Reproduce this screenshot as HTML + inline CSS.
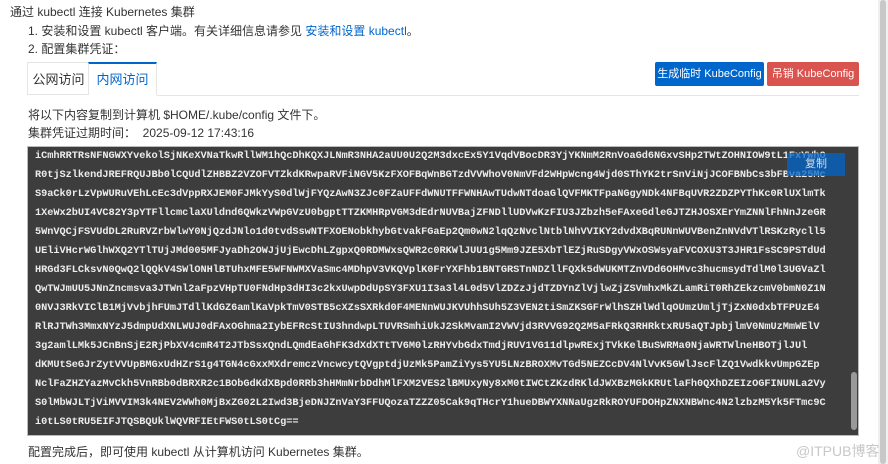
<!DOCTYPE html>
<html><head><meta charset="utf-8"><style>
body{margin:0;width:888px;height:464px;background:#fff;font-family:"Liberation Sans","Noto Sans CJK SC",sans-serif;font-size:12px;color:#333;position:relative;overflow:hidden}
.a{position:absolute;white-space:nowrap;line-height:16px}
.tab{position:absolute;top:62px;height:33px;line-height:33px;text-align:center;font-size:13px;border:1px solid #e5e5e5;box-sizing:border-box}
.btn{position:absolute;top:62px;height:24px;line-height:24px;color:#fff;text-align:center;font-size:11px;border-radius:2px;white-space:nowrap;overflow:hidden}
.ta{position:absolute;left:27px;top:146px;width:832px;height:290px;background:#3d3d3d;border:1px solid #bbb;box-sizing:border-box;overflow:hidden}
.ta pre{margin:0;position:absolute;left:7px;top:-19px;font-family:"Liberation Mono",monospace;font-size:10.3px;line-height:19px;color:#ececec;font-weight:bold;letter-spacing:-0.05px}
</style></head><body>
<div class="a" style="left:10px;top:4px">通过 kubectl 连接 Kubernetes 集群</div>
<div class="a" style="left:28px;top:23px">1. 安装和设置 kubectl 客户端。有关详细信息请参见 <span style="color:#0066cc">安装和设置 kubectl</span>。</div>
<div class="a" style="left:28px;top:41px">2. 配置集群凭证：</div>
<div class="tab" style="left:27px;width:62px;color:#333;border-right:none">公网访问</div>
<div class="tab" style="left:88px;width:69px;color:#0066cc;border-top:2px solid #0066cc;border-bottom:none;background:#fff;line-height:31px">内网访问</div>
<div class="a" style="left:157px;top:95px;width:702px;height:1px;background:#e5e5e5"></div>
<div class="btn" style="left:655px;width:109px;background:#0066cc">生成临时 KubeConfig</div>
<div class="btn" style="left:767px;width:92px;background:#d9534f">吊销 KubeConfig</div>
<div class="a" style="left:28px;top:107px">将以下内容复制到计算机 $HOME/.kube/config 文件下。</div>
<div class="a" style="left:28px;top:125px">集群凭证过期时间：&nbsp; 2025-09-12 17:43:16</div>
<div class="ta"><pre>ZXZpcHNOaSYyYWtjYUZJbmZ3dWx5UmNUbmtuSVZrVWN0dGpxbmhNRmlTcXVhRXZEbFdMNzBvTmZhS1BXY3NLZkhLT2NwdFRJUnFBSmN0UlAx
iCmhRRTRsNFNGWXYvekolSjNKeXVNaTkwRllWM1hQcDhKQXJLNmR3NHA2aUU0U2Q2M3dxcEx5Y1VqdVBocDR3YjYKNmM2RnVoaGd6NGxvSHp2TWtZOHNIOW9tL1FxYWhO
R0tjSzlkendJREFRQUJBb0lCQUdlZHBBZ2VZOFVTZkdKRwpaRVFiNGV5KzFXOFBqWnBGTzdVVWhoV0NmVFd2WHpWcng4Wjd0SThYK2trSnViNjJCOFBNbCs3bFBva25Mc
S9aCk0rLzVpWURuVEhLcEc3dVppRXJEM0FJMkYyS0dlWjFYQzAwN3ZJc0FZaUFFdWNUTFFWNHAwTUdwNTdoaGlQVFMKTFpaNGgyNDk4NFBqUVR2ZDZPYThKc0RlUXlmTk
1XeWx2bUI4VC82Y3pYTFllcmclaXUldnd6QWkzVWpGVzU0bgptTTZKMHRpVGM3dEdrNUVBajZFNDllUDVwKzFIU3JZbzh5eFAxeGdleGJTZHJOSXErYmZNNlFhNnJzeGR
5WnVQCjFSVUdDL2RuRVZrbWlwY0NjQzdJNlo1d0tvdSswNTFXOENobkhybGtvakFGaEp2Qm0wN2lqQzNvclNtblNhVVIKY2dvdXBqRUNnWUVBenZnNVdVTlRSKzRycll5
UEliVHcrWGlhWXQ2YTlTUjJMd005MFJyaDh2OWJjUjEwcDhLZgpxQ0RDMWxsQWR2c0RKWlJUU1g5Mm9JZE5XbTlEZjRuSDgyVWxOSWsyaFVCOXU3T3JHR1FsSC9PSTdUd
HRGd3FLCksvN0QwQ2lQQkV4SWlONHlBTUhxMFE5WFNWMXVaSmc4MDhpV3VKQVplK0FrYXFhb1BNTGRSTnNDZllFQXk5dWUKMTZnVDd6OHMvc3hucmsydTdlM0l3UGVaZl
QwTWJmUU5JNnZncmsva3JTWnl2aFpzVHpTU0FNdHp3dHI3c2kxUwpDdUpSY3FXU1I3a3l4L0d5VlZDZzJjdTZDYnZlVjlwZjZSVmhxMkZLamRiT0RhZEkzcmV0bmN0Z1N
0NVJ3RkVIClB1MjVvbjhFUmJTdllKdGZ6amlKaVpkTmV0STB5cXZsSXRkd0F4MENnWUJKVUhhSUh5Z3VEN2tiSmZKSGFrWlhSZHlWdlqOUmzUmljTjZxN0dxbTFPUzE4
RlRJTWh3MmxNYzJ5dmpUdXNLWUJ0dFAxOGhma2IybEFRcStIU3hndwpLTUVRSmhiUkJ2SkMvamI2VWVjd3RVVG92Q2M5aFRkQ3RHRktxRU5aQTJpbjlmV0NmUzMmWElV
3g2amlLMk5JCnBnSjE2RjPbXV4cmR4T2JTbSsxQndLQmdEaGhFK3dXdXTtTV6M0lzRHYvbGdxTmdjRUV1VG11dlpwRExjTVkKelBuSWRMa0NjaWRTWlneHBOTjlJUl
dKMUtSeGJrZytVVUpBMGxUdHZrS1g4TGN4cGxxMXdremczVncwcytQVgptdjUzMk5PamZiYys5YU5LNzBROXMvTGd5NEZCcDV4NlVvK5GWlJscFlZQ1VwdkkvUmpGZEp
NclFaZHZYazMvCkh5VnRBb0dBRXR2c1BObGdKdXBpd0RRb3hHMmNrbDdhMlFXM2VES2lBMUxyNy8xM0tIWCtZKzdRKldJWXBzMGkKRUtlaFh0QXhDZEIzOGFINUNLa2Vy
S0lMbWJLTjViMVVIM3k4NEV2WWh0MjBxZG02L2Iwd3BjeDNJZnVaY3FFUQozaTZZZ05Cak9qTHcrY1hueDBWYXNNaUgzRkROYUFDOHpZNXNBWnc4N2lzbzM5Yk5FTmc9C
i0tLS0tRU5EIFJTQSBQUklWQVRFIEtFWS0tLS0tCg==</pre>
<div style="position:absolute;left:759px;top:6px;width:58px;height:23px;background:rgba(0,102,204,.75);color:#ddd;text-align:center;line-height:23px;font-size:11px">复制</div>
<div style="position:absolute;left:823px;top:225px;width:6px;height:58px;background:#999;border-radius:3px"></div>
</div>
<div class="a" style="left:28px;top:444px">配置完成后，即可使用 kubectl 从计算机访问 Kubernetes 集群。</div>
<div class="a" style="left:878px;top:0;width:10px;height:464px;background:#f0f0f0"></div>
<div class="a" style="left:880px;top:0;width:6px;height:464px;background:#c8c8c8;border-radius:3px"></div>
<div class="a" style="left:796px;top:441px;font-size:14px;line-height:20px;color:#c8c8c8">@ITPUB博客</div>
</body></html>
